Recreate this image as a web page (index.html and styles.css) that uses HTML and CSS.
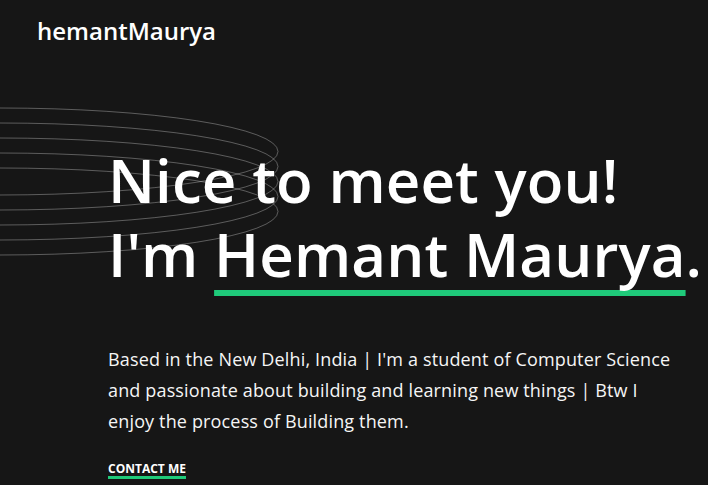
FILE: index.html
```html
<!DOCTYPE html>
<html lang="en">
<head>
<meta charset="utf-8">
<title>hemantMaurya</title>
<link rel="stylesheet" href="styles.css">
</head>
<body>
<svg class="rings" width="290" height="270" viewBox="0 0 290 270" aria-hidden="true">
  <g fill="none" stroke="#ffffff" stroke-opacity="0.3" stroke-width="1">
    <ellipse cx="0" cy="151.5" rx="278" ry="43.5"/>
    <ellipse cx="0" cy="166.5" rx="278" ry="43.5"/>
    <ellipse cx="0" cy="181.5" rx="278" ry="43.5"/>
    <ellipse cx="0" cy="196.5" rx="278" ry="43.5"/>
    <ellipse cx="0" cy="211.5" rx="278" ry="43.5"/>
  </g>
</svg>
<header class="top">
  <span class="logo">hemantMaurya</span>
</header>
<main class="hero">
  <h1 class="title">Nice to meet you!<br>I'm <span class="name">Hemant Maurya</span>.</h1>
  <p class="intro">Based in the New Delhi, India | I'm a student of Computer Science and passionate about building and learning new things | Btw I enjoy the process of Building them.</p>
  <a class="contact" href="#contact">CONTACT ME</a>
</main>
</body>
</html>
```

FILE: styles.css
```css
html, body {
  margin: 0;
  padding: 0;
}
body {
  background: #161616;
  color: #ffffff;
  font-family: "Open Sans", "Lato", sans-serif;
  overflow: hidden;
}
.rings {
  position: absolute;
  top: 0;
  left: 0;
}
.top {
  padding: 16px 0 0 37px;
}
.logo {
  display: block;
  font-size: 24px;
  line-height: 30px;
  font-weight: 600;
}
.hero {
  position: relative;
  z-index: 1;
  padding-left: 108px;
}
.title {
  margin: 97px 0 0 0;
  font-size: 60px;
  line-height: 74px;
  font-weight: 600;
  letter-spacing: 0.1px;
}
.name {
  text-decoration: underline;
  text-decoration-color: #1fca7a;
  text-decoration-thickness: 6px;
  text-underline-offset: 13px;
  text-decoration-skip-ink: none;
}
.intro {
  margin: 53px 0 0 0;
  max-width: 572px;
  font-size: 18px;
  line-height: 31px;
  letter-spacing: 0.15px;
  color: #f5f5f5;
}
.contact {
  display: inline-block;
  margin-top: 24px;
  font-size: 12px;
  line-height: 15px;
  font-weight: 700;
  color: #ffffff;
  text-decoration: none;
  border-bottom: 3px solid #1fca7a;
}
```
